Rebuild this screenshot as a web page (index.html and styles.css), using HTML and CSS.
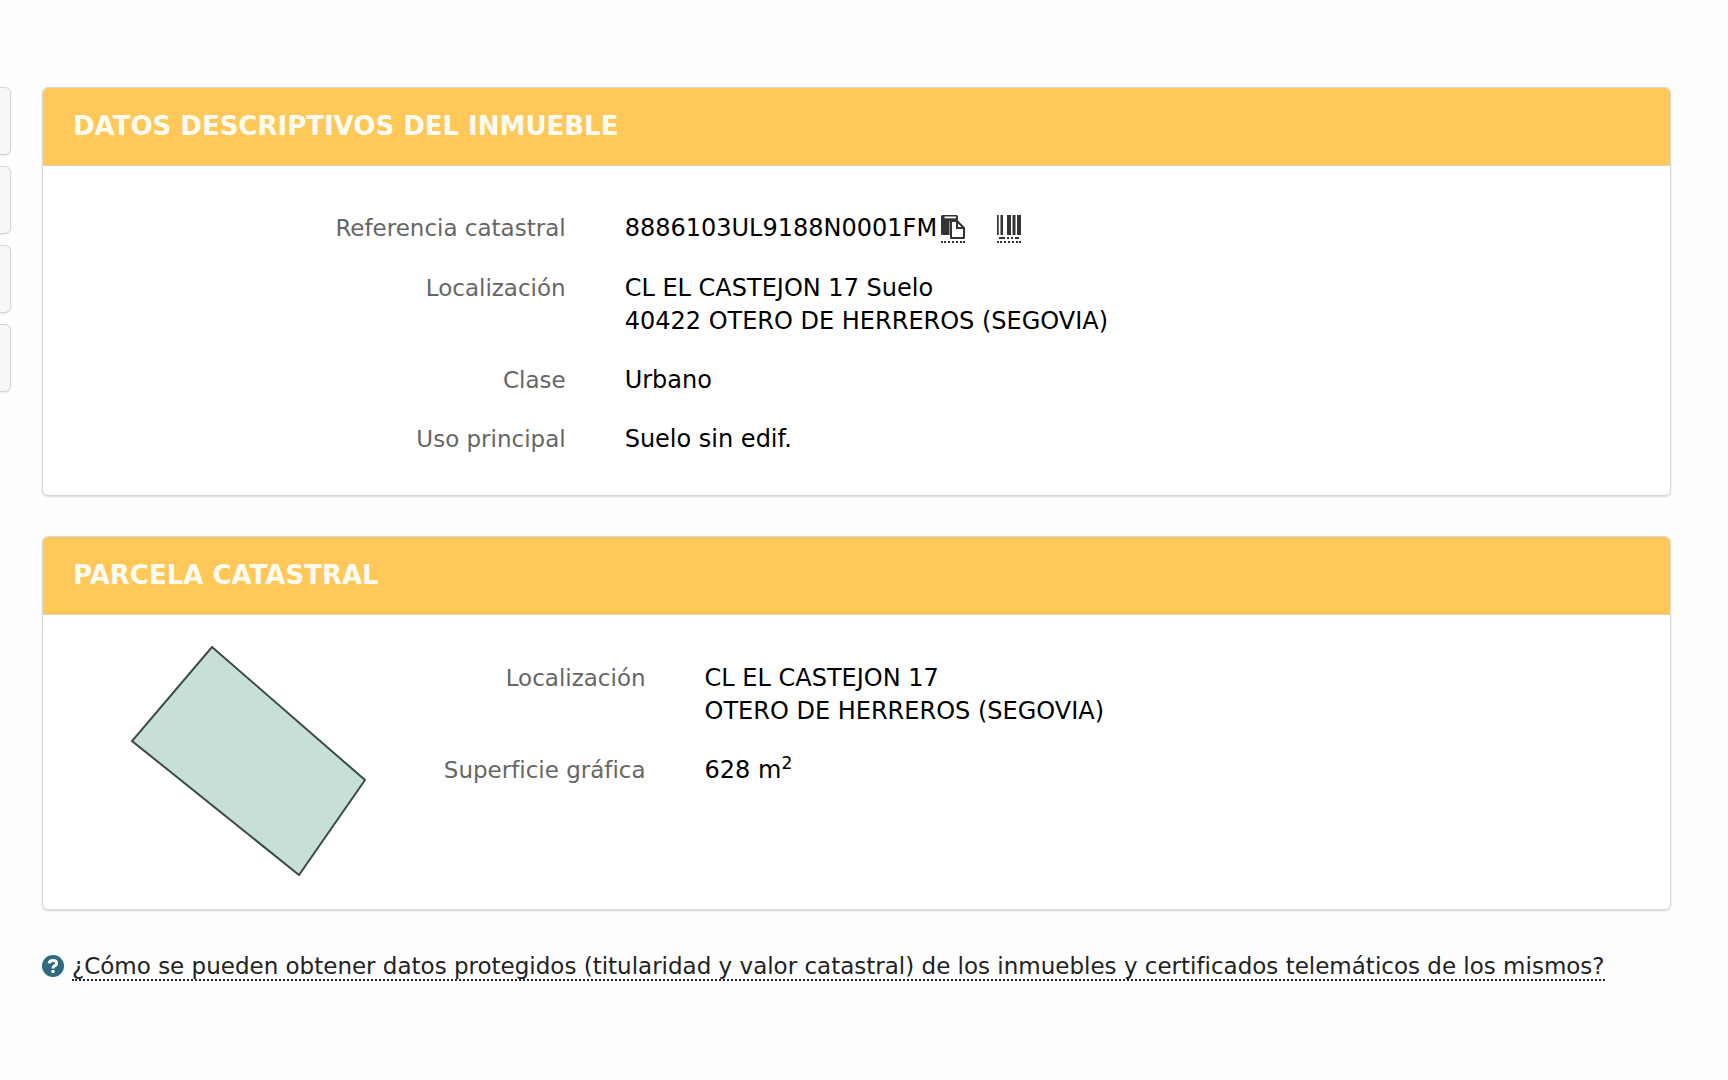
FILE: index.html
```html
<!DOCTYPE html>
<html lang="es">
<head>
<meta charset="utf-8">
<title>Datos descriptivos del inmueble</title>
<link rel="stylesheet" href="styles.css">
</head>
<body>
<div class="layout">
  <nav class="side" aria-label="Secciones">
    <button class="side-tab" type="button" aria-label="Sección 1"></button>
    <button class="side-tab" type="button" aria-label="Sección 2"></button>
    <button class="side-tab" type="button" aria-label="Sección 3"></button>
    <button class="side-tab" type="button" aria-label="Sección 4"></button>
  </nav>
  <main class="content">
    <section class="card">
      <h2 class="card-title">DATOS DESCRIPTIVOS DEL INMUEBLE</h2>
      <dl class="facts facts-property">
        <dt>Referencia catastral</dt>
        <dd class="reference">
          <span>8886103UL9188N0001FM</span>
          <a class="icon-link" href="#copiar" aria-label="Copiar referencia">
            <svg viewBox="0 0 24 24" width="24" height="24">
              <path fill="#333" d="M1.500 0H15.500Q17 0 17 1.500V5H10.500Q8.500 5 8.500 7V20H1.500Q0 20 0 18.500V1.500Q0 0 1.500 0Z"/>
              <path fill="#fff" d="M3.500 1.500H15V3.300H3.500Z"/>
              <path fill="#fff" stroke="#333" stroke-width="2" stroke-linejoin="round" d="M10 6H16L23 13V23H10Z"/>
              <path fill="none" stroke="#333" stroke-width="2" d="M16 6V13H23"/>
            </svg>
          </a>
          <a class="icon-link icon-link-barcode" href="#codigo" aria-label="Código de barras">
            <svg viewBox="0 0 24 24" width="24" height="24">
              <path fill="#333" d="M0 0H1.700V20H0ZM3.500 0H6V20H3.500ZM10 0H14V20H10ZM15.500 0H18.500V20H15.500ZM20 0H24V20H20Z"/>
              <path fill="#333" d="M2 22H8V24H2ZM10 22H12V24H10ZM14 22H16V24H14ZM18 22H22V24H18Z"/>
            </svg>
          </a>
        </dd>
        <dt>Localización</dt>
        <dd>CL EL CASTEJON 17 Suelo<br>40422 OTERO DE HERREROS (SEGOVIA)</dd>
        <dt>Clase</dt>
        <dd>Urbano</dd>
        <dt>Uso principal</dt>
        <dd>Suelo sin edif.</dd>
      </dl>
    </section>
    <section class="card">
      <h2 class="card-title">PARCELA CATASTRAL</h2>
      <div class="parcel">
        <svg class="parcel-map" viewBox="0 0 236 230" width="236" height="230" role="img" aria-label="Croquis de la parcela">
          <path fill="#c7dfd9" stroke="#3a4a48" stroke-width="2" d="M82 1L235 134L169 229L2 95Z"/>
        </svg>
        <dl class="facts facts-parcel">
          <dt>Localización</dt>
          <dd>CL EL CASTEJON 17<br>OTERO DE HERREROS (SEGOVIA)</dd>
          <dt>Superficie gráfica</dt>
          <dd>628 m<sup>2</sup></dd>
        </dl>
      </div>
    </section>
    <div class="help">
      <svg viewBox="0 0 22 22" width="22" height="22" aria-hidden="true">
        <circle cx="11" cy="11" r="11" fill="#2f6a80"/>
        <path fill="none" stroke="#fff" stroke-width="3" d="M7 8.500Q7.500 5.500 11 5.500Q14.500 5.500 14.500 8.200Q14.500 10 12.500 10.800Q11 11.500 11 13.500"/>
        <path fill="#fff" d="M9.500 15H12.500V18H9.500Z"/>
      </svg>
      <p class="help-text"><a class="help-link" href="#ayuda">¿Cómo se pueden obtener datos protegidos (titularidad y valor catastral) de los inmuebles y certificados telemáticos de los mismos?</a></p>
    </div>
  </main>
</div>
</body>
</html>
```
FILE: styles.css
```css
* { box-sizing: border-box; }

body {
  margin: 0;
  background: #fefefe;
  color: #000;
  font: 24px/33px Verdana, "DejaVu Sans", sans-serif;
}

.layout {
  display: flex;
  gap: 31px;
  padding: 87px 57px 80px 0;
}

.side {
  flex: 0 0 11px;
  display: flex;
  flex-direction: column;
  gap: 11px;
}

.side-tab {
  height: 68px;
  padding: 0;
  border: 1px solid #d4d4d4;
  border-left: 0;
  border-radius: 0 6px 6px 0;
  background: #f8f8f8;
  box-shadow: 0 1px 2px rgba(0, 0, 0, 0.08);
}

.content {
  flex: 1;
  min-width: 0;
}

.card {
  margin-bottom: 40px;
  border: 1px solid #d8d8d8;
  border-radius: 6px;
  background: #fff;
  box-shadow: 0 1px 2px rgba(0, 0, 0, 0.15);
}

.card-title {
  margin: 0;
  padding: 22px 30px;
  border-bottom: 1px solid #ddd0ad;
  border-radius: 5px 5px 0 0;
  background: #ffc859;
  color: #fffdf3;
  font-size: 26px;
  line-height: 33px;
}

.facts {
  display: grid;
  column-gap: 59px;
  row-gap: 26px;
  margin: 0;
}

.facts dt {
  color: #666;
  font-size: 23px;
  text-align: right;
}

.facts dd { margin: 0; }

.facts-property {
  grid-template-columns: 1fr 2fr;
  padding: 46px 0 39px;
}

.reference {
  display: flex;
  align-items: flex-start;
  min-height: 34px;
}

.icon-link {
  margin: 3px 0 0 4px;
  padding-bottom: 2px;
  border-bottom: 2px dotted #333;
  line-height: 0;
}

.icon-link-barcode { margin-left: 32px; }

.parcel {
  display: grid;
  grid-template-columns: 222fr 778fr;
  padding: 31px 0 33px;
}

.parcel-map { margin-left: 87px; }

.facts-parcel {
  grid-template-columns: 1fr 4fr;
  align-content: start;
  padding-top: 16px;
}

sup {
  font-size: 17px;
  line-height: 0;
}

.help {
  display: flex;
  gap: 8px;
  font-size: 23px;
}

.help svg {
  flex: none;
  margin-top: 5px;
}

.help-text { margin: 0; }

.help-link {
  border-bottom: 2px dotted #222;
  color: #222;
  text-decoration: none;
}
```
